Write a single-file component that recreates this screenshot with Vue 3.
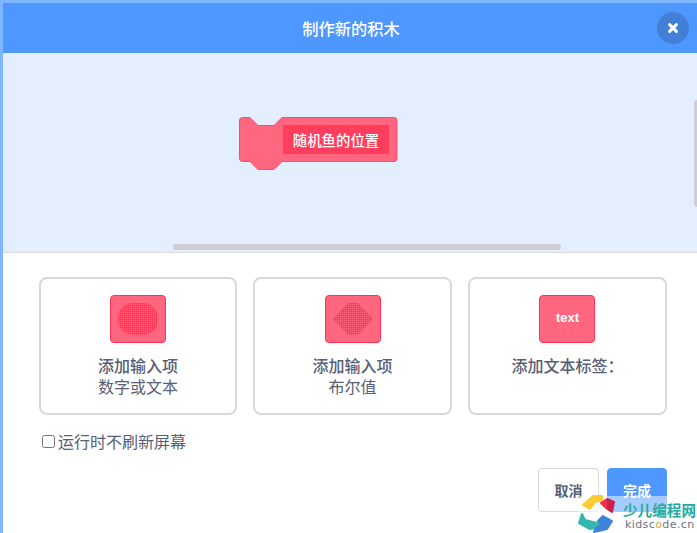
<script setup>
const cards = [
  { id: 'round', title: '添加输入项', sub: '数字或文本' },
  { id: 'bool', title: '添加输入项', sub: '布尔值' },
  { id: 'text', title: '添加文本标签：', sub: '' }
]
</script>

<template>
  <div class="modal">
    <header class="head">
      <span class="title">制作新的积木</span>
      <button class="close" aria-label="关闭">
        <svg width="12" height="12" viewBox="0 0 12 12"><path d="M2.6 2.6 9.4 9.4M9.4 2.6 2.6 9.4" stroke="#fff" stroke-width="3" stroke-linecap="round"/></svg>
      </button>
    </header>

    <section class="workspace">
      <div class="block">
        <svg class="block-shape" width="160" height="54" viewBox="0 0 160 54">
          <path d="M3.500.5H11l8 8h16l8-8h112a3 3 0 0 1 3 3v38a3 3 0 0 1-3 3H43l-8 8H19l-8-8H3.500a3 3 0 0 1-3-3V3.500a3 3 0 0 1 3-3Z" fill="#ff6680" stroke="#ff4a68"/>
        </svg>
        <span class="block-label">随机鱼的位置</span>
      </div>
      <div class="scroll-h"></div>
      <div class="scroll-v"></div>
    </section>

    <section class="body">
      <div class="cards">
        <div v-for="c in cards" :key="c.id" class="card">
          <div class="swatch">
            <svg v-if="c.id === 'round'" width="42" height="34" viewBox="0 0 42 34">
              <defs><pattern id="dotsA" width="2" height="2" patternUnits="userSpaceOnUse"><rect width="2" height="2" fill="#ff3d5d"/><rect width="1" height="1" fill="#ff6680"/></pattern></defs>
              <rect x="1" y="1" width="40" height="32" rx="15" fill="url(#dotsA)"/>
            </svg>
            <svg v-else-if="c.id === 'bool'" width="42" height="34" viewBox="0 0 42 34">
              <defs><pattern id="dotsB" width="2" height="2" patternUnits="userSpaceOnUse"><rect width="2" height="2" fill="#ff3d5d"/><rect width="1" height="1" fill="#ff6680"/></pattern></defs>
              <path d="M16 1H26L41 17 26 33H16L1 17Z" fill="url(#dotsB)"/>
            </svg>
            <span v-else class="swatch-text">text</span>
          </div>
          <div class="card-title">{{ c.title }}</div>
          <div v-if="c.sub" class="card-sub">{{ c.sub }}</div>
        </div>
      </div>

      <label class="check"><input type="checkbox" />运行时不刷新屏幕</label>

      <div class="actions">
        <button class="btn cancel">取消</button>
        <button class="btn ok">完成</button>
      </div>
    </section>

    <div class="mark">
      <svg class="mark-logo" width="42" height="39" viewBox="0 0 42 39">
        <defs>
          <linearGradient id="redSplit" x1="0" y1="0" x2="42" y2="0" gradientUnits="userSpaceOnUse">
            <stop offset="0.74" stop-color="#f0304f"/>
            <stop offset="0.74" stop-color="#c92049"/>
          </linearGradient>
        </defs>
        <path d="M7 11 17 2 26 2 26 6 19 8 14 15Z" fill="#fdcb33" stroke="#fdcb33" stroke-width="2" stroke-linejoin="round"/>
        <path d="M25 9 31 5 38 8 36 18 30 14Z" fill="url(#redSplit)" stroke="url(#redSplit)" stroke-width="2" stroke-linejoin="round"/>
        <path d="M6 20 3 29 14 35 26 33 26 30 17 28 9 26Z" fill="#35b5ab" stroke="#35b5ab" stroke-width="2" stroke-linejoin="round"/>
        <path d="M27 22 36 27 31 35 18 38 20 34 26 31 22 27Z" fill="#3f83dc" stroke="#3f83dc" stroke-width="2" stroke-linejoin="round"/>
      </svg>
      <div class="mark-text">
        <span class="mark-cn">少儿编程网</span>
        <span class="mark-en">kidsc<i class="mark-o">o</i>de.cn</span>
      </div>
    </div>
  </div>
</template>

<style>
html, body { margin: 0; background: #fff; }
</style>

<style scoped>
.modal {
  position: relative;
  box-sizing: border-box;
  width: 697px;
  height: 533px;
  overflow: hidden;
  border-top: 3px solid #80b5ff;
  border-left: 3px solid #80b5ff;
  background: #fff;
  color: #575e75;
  font-family: "Noto Sans CJK SC", "Noto Sans", sans-serif;
  display: flex;
  flex-direction: column;
}
.head {
  position: relative;
  height: 50px;
  flex: none;
  background: #4d97ff;
  display: flex;
  align-items: center;
  justify-content: center;
}
.title { color: #fff; font-size: 16.300px; font-weight: 500; padding-left: 2px; }
.close {
  position: absolute;
  right: 8px;
  top: 9px;
  width: 32px;
  height: 32px;
  padding: 0;
  border: 0;
  border-radius: 50%;
  background: #4280d7;
  display: flex;
  align-items: center;
  justify-content: center;
}
.workspace {
  position: relative;
  height: 200px;
  flex: none;
  box-sizing: border-box;
  background: #e3efff;
  border-bottom: 1px solid #d9d9d9;
  overflow: hidden;
}
.block { position: absolute; left: 236px; top: 64px; width: 160px; height: 54px; }
.block-shape { display: block; }
.block-label {
  position: absolute;
  left: 44px;
  top: 8px;
  width: 106px;
  height: 29px;
  background: #ff3d5d;
  color: #fff;
  font-size: 14.400px;
  font-weight: 500;
  line-height: 29px;
  text-align: center;
}
.scroll-h { position: absolute; left: 170px; top: 191px; width: 388px; height: 6px; border-radius: 3px; background: #cfcdd2; }
.scroll-v { position: absolute; right: 0; top: 47px; width: 3px; height: 107px; border-radius: 3px 0 0 3px; background: #cfcdd2; }
.body { flex: 1; padding: 24px 30px 0 36px; }
.cards { display: grid; grid-template-columns: 198px 199px 199px; column-gap: 16px; }
.card {
  box-sizing: border-box;
  height: 138px;
  border: 2px solid #d9d9d9;
  border-radius: 8px;
  display: flex;
  flex-direction: column;
  align-items: center;
  padding-top: 16px;
}
.swatch {
  box-sizing: border-box;
  width: 56px;
  height: 48px;
  flex: none;
  background: #ff6680;
  border: 1px solid #ff3355;
  border-radius: 4px;
  display: flex;
  align-items: center;
  justify-content: center;
  margin-bottom: 11px;
}
.card:last-child .swatch { margin-left: -1px; }
.swatch-text { color: #fff; font-family: "Liberation Sans", sans-serif; font-size: 13px; font-weight: 700; margin-top: -4px; margin-left: 1px; }
.card-title { font-size: 16px; font-weight: 500; line-height: 22px; }
.card-sub { font-size: 16px; line-height: 21px; }
.check {
  display: flex;
  align-items: center;
  margin: 14px 0 0 3px;
  font-size: 16px;
  line-height: 24px;
}
.check input { width: 13px; height: 13px; margin: 0 3px 0 0; }
.actions { display: flex; justify-content: flex-end; gap: 8px; margin-top: 15px; }
.btn {
  box-sizing: border-box;
  height: 44px;
  width: 61px;
  padding: 0;
  font-family: inherit;
  font-size: 14px;
  font-weight: 700;
  border-radius: 4px;
}
.cancel { background: #fff; color: #575e75; border: 1px solid #d9d9d9; }
.ok { width: 60px; background: #4d97ff; color: #fff; border: 1px solid #4d97ff; }
.mark {
  position: absolute;
  left: 575px;
  top: 493px;
  width: 119px;
  height: 37px;
  background: rgba(255, 255, 255, 0.5);
  box-sizing: border-box;
  padding: 6px 0 0 45px;
  pointer-events: none;
}
.mark-logo { position: absolute; left: -2px; top: -2px; }
.mark-text { display: flex; flex-direction: column; }
.mark-cn { color: #27a99b; font-size: 14.600px; line-height: 16px; font-weight: 700; white-space: nowrap; }
.mark-en { color: #6f7180; font-family: "DejaVu Sans", sans-serif; font-size: 11px; line-height: 14px; letter-spacing: 0.4px; margin-left: 2px; white-space: nowrap; }
.mark-o { font-style: normal; color: #d9a441; }
</style>
